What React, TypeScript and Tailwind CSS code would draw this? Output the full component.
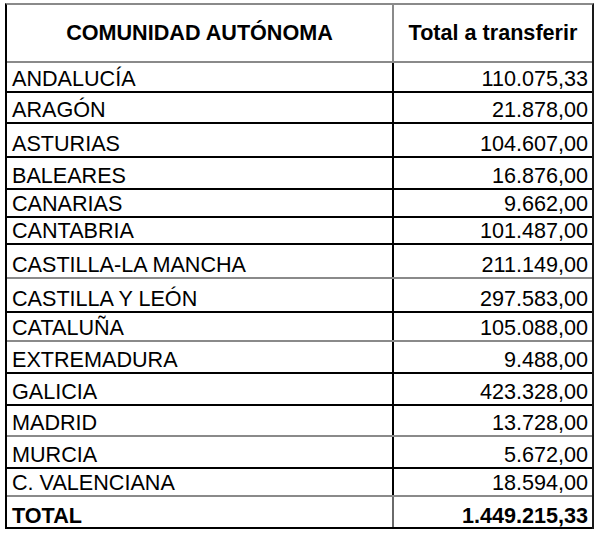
import React from "react";

type Row = { name: string; value: string; h: number; gray?: boolean };

const rows: Row[] = [
  { name: "ANDALUCÍA", value: "110.075,33", h: 30 },
  { name: "ARAGÓN", value: "21.878,00", h: 31 },
  { name: "ASTURIAS", value: "104.607,00", h: 34 },
  { name: "BALEARES", value: "16.876,00", h: 32 },
  { name: "CANARIAS", value: "9.662,00", h: 28 },
  { name: "CANTABRIA", value: "101.487,00", h: 27 },
  { name: "CASTILLA-LA MANCHA", value: "211.149,00", h: 34, gray: true },
  { name: "CASTILLA Y LEÓN", value: "297.583,00", h: 34 },
  { name: "CATALUÑA", value: "105.088,00", h: 29, gray: true },
  { name: "EXTREMADURA", value: "9.488,00", h: 32 },
  { name: "GALICIA", value: "423.328,00", h: 32 },
  { name: "MADRID", value: "13.728,00", h: 31, gray: true },
  { name: "MURCIA", value: "5.672,00", h: 32 },
  { name: "C. VALENCIANA", value: "18.594,00", h: 28, gray: true },
];

export default function App() {
  return (
    <div className="bg-white w-[600px] h-[534px] pt-[3px] pl-[5px] text-black font-['Liberation_Sans',Arial,sans-serif] text-[21.6px]">
      <div className="w-[589px] border-t-2 border-l-2 border-r-2 border-t-[#8a8a8a] border-l-black border-r-[#1a1a1a]">
        <div className="flex h-[58px] border-b-2 border-b-[#8a8a8a] font-bold">
          <div className="w-[387px] border-r-2 border-r-[#8a8a8a] flex items-center justify-center">
            COMUNIDAD AUTÓNOMA
          </div>
          <div className="flex-1 flex items-center justify-center">Total a transferir</div>
        </div>
        {rows.map((r) => (
          <div
            key={r.name}
            className={
              "flex border-b-2 " + (r.gray ? "border-b-[#8a8a8a]" : "border-b-black")
            }
            style={{ height: r.h }}
          >
            <div className="w-[387px] border-r-2 border-r-black flex items-end pl-[5px] pb-px leading-none">
              {r.name}
            </div>
            <div className="flex-1 flex items-end justify-end pr-[4px] pb-px leading-none">
              {r.value}
            </div>
          </div>
        ))}
        <div className="flex h-[32px] border-b-2 border-b-black font-bold">
          <div className="w-[387px] border-r-2 border-r-[#6a6a6a] flex items-end pl-[5px] leading-none">
            TOTAL
          </div>
          <div className="flex-1 flex items-end justify-end pr-[4px] leading-none">
            1.449.215,33
          </div>
        </div>
      </div>
    </div>
  );
}
